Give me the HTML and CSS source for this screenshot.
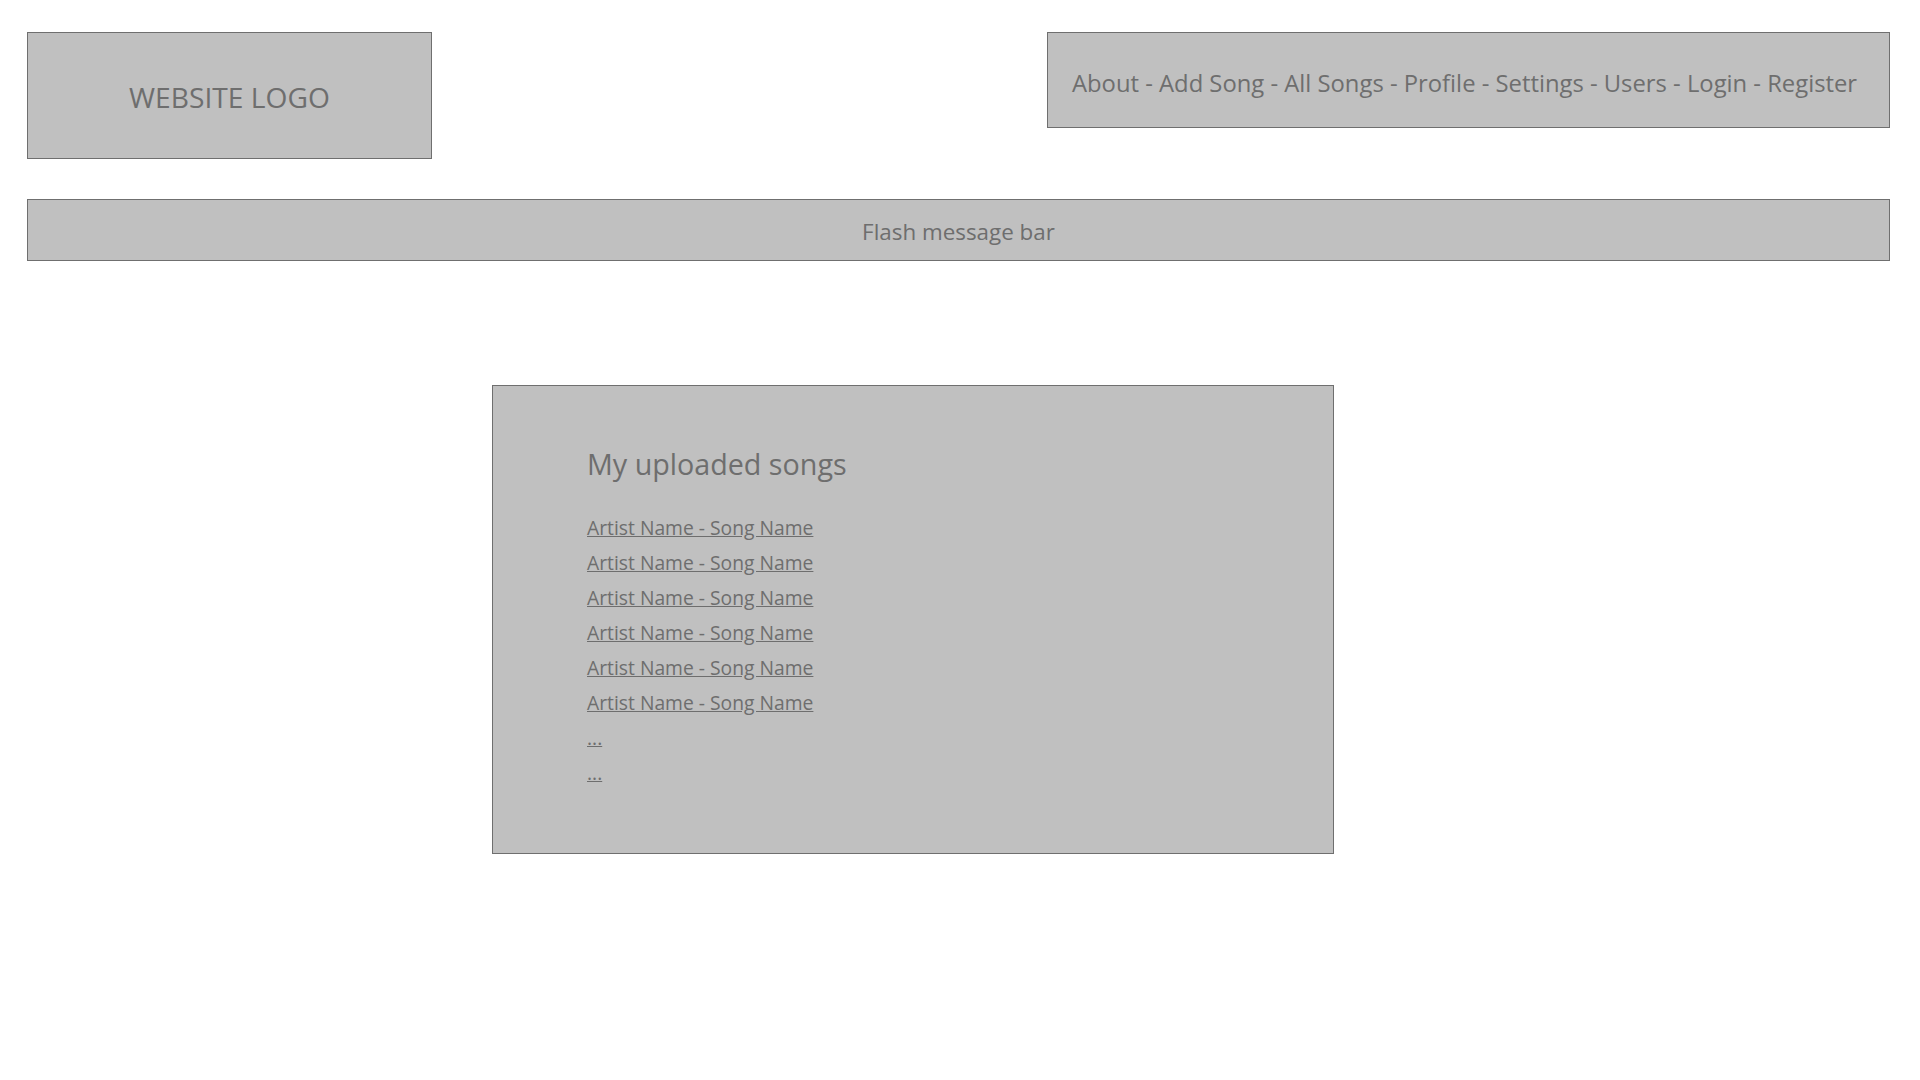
FILE: index.html
```html
<!DOCTYPE html>
<html lang="en">
<head>
<meta charset="utf-8">
<title>My uploaded songs</title>
<link rel="stylesheet" href="styles.css">
</head>
<body>
<div class="page">
  <header class="header">
    <div class="logo">WEBSITE LOGO</div>
    <nav class="nav">About - Add Song - All Songs - Profile - Settings - Users - Login - Register</nav>
  </header>
  <div class="flash">Flash message bar</div>
  <main class="content">
    <section class="card">
      <h2 class="card-title">My uploaded songs</h2>
      <ul class="song-list">
        <li><a href="#">Artist Name - Song Name</a></li>
        <li><a href="#">Artist Name - Song Name</a></li>
        <li><a href="#">Artist Name - Song Name</a></li>
        <li><a href="#">Artist Name - Song Name</a></li>
        <li><a href="#">Artist Name - Song Name</a></li>
        <li><a href="#">Artist Name - Song Name</a></li>
        <li><a href="#">...</a></li>
        <li><a href="#">...</a></li>
      </ul>
    </section>
  </main>
</div>
</body>
</html>
```
FILE: styles.css
```css
html, body {
  margin: 0;
  padding: 0;
  background: #ffffff;
}
body {
  font-family: "Open Sans", "Noto Sans", sans-serif;
  color: #6e6e6e;
}
.page {
  padding: 32px 30px 0 27px;
}
.header {
  display: flex;
  justify-content: space-between;
  align-items: flex-start;
}
.logo {
  box-sizing: border-box;
  width: 405px;
  height: 127px;
  background: #c0c0c0;
  border: 1px solid #6f6f6f;
  display: flex;
  align-items: center;
  justify-content: center;
  font-size: 28.2px;
  padding-top: 2px;
}
.nav {
  box-sizing: border-box;
  width: 843px;
  height: 96px;
  background: #c0c0c0;
  border: 1px solid #6f6f6f;
  font-size: 23.8px;
  line-height: 30px;
  padding: 35px 0 0 24px;
  white-space: nowrap;
}
.flash {
  box-sizing: border-box;
  margin-top: 40px;
  height: 62px;
  background: #c0c0c0;
  border: 1px solid #6f6f6f;
  text-align: center;
  font-size: 22.4px;
  line-height: 30px;
  padding-top: 17px;
}
.content {
  margin-top: 124px;
  padding-left: 465px;
}
.card {
  box-sizing: border-box;
  width: 842px;
  height: 469px;
  background: #c0c0c0;
  border: 1px solid #6f6f6f;
  padding: 60px 94px 0 94px;
}
.card-title {
  margin: 0;
  font-size: 28.7px;
  font-weight: 400;
  line-height: 36px;
}
.song-list {
  list-style: none;
  margin: 28px 0 0 0;
  padding: 0;
}
.song-list li {
  font-size: 19.3px;
  line-height: 35px;
}
.song-list a {
  color: #6e6e6e;
  text-decoration: underline;
}
```
